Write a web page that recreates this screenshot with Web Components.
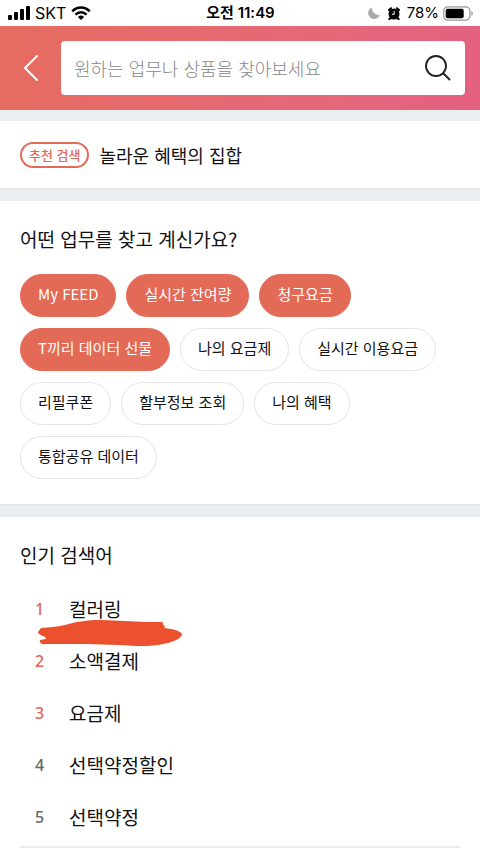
<!DOCTYPE html>
<html lang="ko">
<head>
<meta charset="utf-8">
<meta name="viewport" content="width=device-width, initial-scale=1">
<title>검색</title>
<style>
body{margin:0;background:#fff;color:#111;font-family:"Noto Sans CJK KR",sans-serif;overflow:hidden}
</style>
</head>
<body>
<search-page></search-page>
<script>
function define(name, html) {
  const t = document.createElement('template');
  t.innerHTML = html;
  customElements.define(name, class extends HTMLElement {
    constructor() {
      super();
      this.attachShadow({mode: 'open'}).append(t.content.cloneNode(true));
    }
  });
}

define('status-bar', `
<style>
:host{display:grid;grid-template-columns:1fr auto 1fr;align-items:center;height:26px;padding:0 7px 0 8px;background:#fff;color:#000;font:16px/24px Inter,"Noto Sans CJK KR",sans-serif}
.left,.right{display:flex;align-items:center}
.left{gap:5px}
.right{justify-content:flex-end;gap:4px;font-size:15px}
.time{font-size:15px;font-weight:600}
svg{display:block;flex:none}
.alarm{margin:0 3px 0 4px}
</style>
<div class="left">
<svg width="22" height="14" viewBox="0 0 22 14"><rect y="9" width="4" height="5" rx="1"/><rect x="6" y="6" width="4" height="8" rx="1"/><rect x="12" y="3" width="4" height="11" rx="1"/><rect x="18" width="4" height="14" rx="1"/></svg>
<span>SKT</span>
<svg width="20" height="14" viewBox="0 0 20 14" fill="none" stroke="#000" stroke-width="2.6"><path d="M1.3 5.3C6.3.2 13.700 .2 18.700 5.300"/><path d="M4.500 8.600C7.600 5.500 12.400 5.500 15.500 8.600"/><path d="M10 14 6.900 10.900Q10 8.300 13.100 10.900Z" fill="#000" stroke="none"/></svg>
</div>
<span class="time">오전 11:49</span>
<div class="right">
<svg width="12" height="12" viewBox="0 0 12 12"><path fill="#aaa" d="M4 .4A6 6 0 1 0 11.800 8 7 7 0 0 1 4 .4Z"/></svg>
<svg class="alarm" width="12" height="13" viewBox="0 0 12 13"><circle cx="6" cy="7" r="5.500"/><path d="M1 3 3 1.200M9 1.200l2 1.800M2.500 11 1.300 12.300M9.500 11l1.200 1.300" stroke="#000" stroke-width="2" stroke-linecap="round"/><path d="M6.200 4v3.300H4" fill="none" stroke="#fff" stroke-width="1"/></svg>
<span>78%</span>
<svg width="30" height="15" viewBox="0 0 30 15"><rect x=".8" y=".8" width="26" height="13.400" rx="4" fill="none" stroke="#999" stroke-width="1.200"/><rect x="2.700" y="2.700" width="18" height="9.600" rx="2"/><path d="M28.300 5v5q1.500-.8 1.500-2.500T28.300 5Z" fill="#999"/></svg>
</div>`);

define('search-header', `
<style>
:host{display:flex;height:84px;box-sizing:border-box;padding:15px 15px 15px 0;background:linear-gradient(100deg,#e66c60,#e4677a 70%,#e36180)}
button{display:grid;place-items:center;padding:0;border:0;background:none;cursor:pointer}
.back{width:61px}
form{flex:1;display:flex;min-width:0;background:#fff;border-radius:4px}
input{flex:1;min-width:0;padding:0 0 0 13px;border:0;outline:0;background:none;color:#222;font:300 18px/26px "Noto Sans CJK KR",sans-serif}
input::placeholder{color:#888;opacity:1}
.go{width:54px}
</style>
<button class="back" aria-label="뒤로"><svg width="16" height="26" viewBox="0 0 16 26" fill="none" stroke="#fff" stroke-width="2" stroke-linecap="round"><path d="M14 1 2 13 14 25"/></svg></button>
<form role="search" onsubmit="return false"><input type="text" aria-label="검색어" placeholder="원하는 업무나 상품을 찾아보세요"><button class="go" aria-label="검색"><svg width="28" height="28" viewBox="0 0 28 28" fill="none" stroke="#222" stroke-width="1.900" stroke-linecap="round"><circle cx="12" cy="12" r="10"/><path d="m19.500 19.500 6 6"/></svg></button></form>`);

define('recommend-bar', `
<style>
:host{display:flex;align-items:center;gap:10px;height:67px;padding:0 20px}
b{box-sizing:border-box;height:26px;padding:0 7px;border:2px solid #e36a57;border-radius:13px;color:#e36a57;font:500 13px/21px "Noto Sans CJK KR",sans-serif}
a{color:inherit;text-decoration:none;font-size:18px;line-height:28px}
</style>
<b><slot name="label"></slot></b><a href="#"><slot></slot></a>`);

define('page-section', `
<style>
:host{display:block;padding:23px 20px 25px}
h2{margin:0;font-size:19px;line-height:29px;font-weight:400}
</style>
<h2><slot name="title"></slot></h2><slot></slot>`);

define('section-gap', `<style>:host{display:block;box-sizing:border-box;height:13px;background:#ecedef;border-top:1px solid #e5e6e8}:host([first]){height:11px;border:0}</style>`);

define('chip-list', `<style>:host{display:flex;flex-wrap:wrap;gap:11px 10px;margin-top:21px}</style><slot></slot>`);

define('chip-button', `
<style>
:host{display:block}
button{height:43px;padding:0 17px 3px;border:1px solid #e3e3e3;border-radius:22px;background:#fff;color:#111;font:15px/22px "Noto Sans CJK KR",sans-serif;cursor:pointer;white-space:nowrap}
:host([on]) button{background:#e36a57;border-color:#e36a57;color:#fff}
</style>
<button><slot></slot></button>`);

define('rank-list', `<style>:host{display:block;position:relative;margin-top:14px;padding-bottom:3px;border-bottom:2px solid #ebebeb}</style><div role="list"><slot></slot></div><slot name="mark"></slot>`);

define('rank-item', `
<style>
:host{display:block}
a{display:flex;align-items:center;height:52px;color:inherit;text-decoration:none;font-size:19px;line-height:28px}
span{width:39px;margin-right:10px;box-sizing:border-box;padding-left:15px;color:#666;font-size:16px;font-weight:500;font-family:"Noto Sans","Noto Sans CJK KR",sans-serif}
:host([hot]) span{color:#e8645a}
</style>
<a href="#"><span><slot name="n"></slot></span><slot></slot></a>`);

define('marker-stroke', `
<style>:host{position:absolute;left:17px;top:36px}svg{display:block}</style>
<svg width="146" height="28" viewBox="0 0 146 28"><path fill="#eb512f" d="M4 9C12 8 19 8 28 6 38 3 49 1 64 1L88 2C103 3 116 3 124 3Q127 3 126 6L128 7 127 9C137 10 143 12 145 15 145 19 137 23 126 25 113 28 98 27 82 26L48 25 9 25Q2 26 3 21L9 20 8 18C4 16 1 15 1 13Z"/></svg>`);

define('search-page', `
<style>:host{display:block}</style>
<status-bar></status-bar>
<search-header></search-header>
<section-gap first></section-gap>
<recommend-bar><span slot="label">추천 검색</span>놀라운 혜택의 집합</recommend-bar>
<section-gap></section-gap>
<page-section><span slot="title">어떤 업무를 찾고 계신가요?</span>
<chip-list><chip-button on>My FEED</chip-button><chip-button on>실시간 잔여량</chip-button><chip-button on>청구요금</chip-button><chip-button on>T끼리 데이터 선물</chip-button><chip-button>나의 요금제</chip-button><chip-button>실시간 이용요금</chip-button><chip-button>리필쿠폰</chip-button><chip-button>할부정보 조회</chip-button><chip-button>나의 혜택</chip-button><chip-button>통합공유 데이터</chip-button></chip-list>
</page-section>
<section-gap></section-gap>
<page-section><span slot="title">인기 검색어</span>
<rank-list>
<rank-item role="listitem" hot><span slot="n">1</span>컬러링</rank-item>
<rank-item role="listitem" hot><span slot="n">2</span>소액결제</rank-item>
<rank-item role="listitem" hot><span slot="n">3</span>요금제</rank-item>
<rank-item role="listitem"><span slot="n">4</span>선택약정할인</rank-item>
<rank-item role="listitem"><span slot="n">5</span>선택약정</rank-item>
<marker-stroke slot="mark" aria-hidden="true"></marker-stroke>
</rank-list>
</page-section>`);
</script>
</body>
</html>
